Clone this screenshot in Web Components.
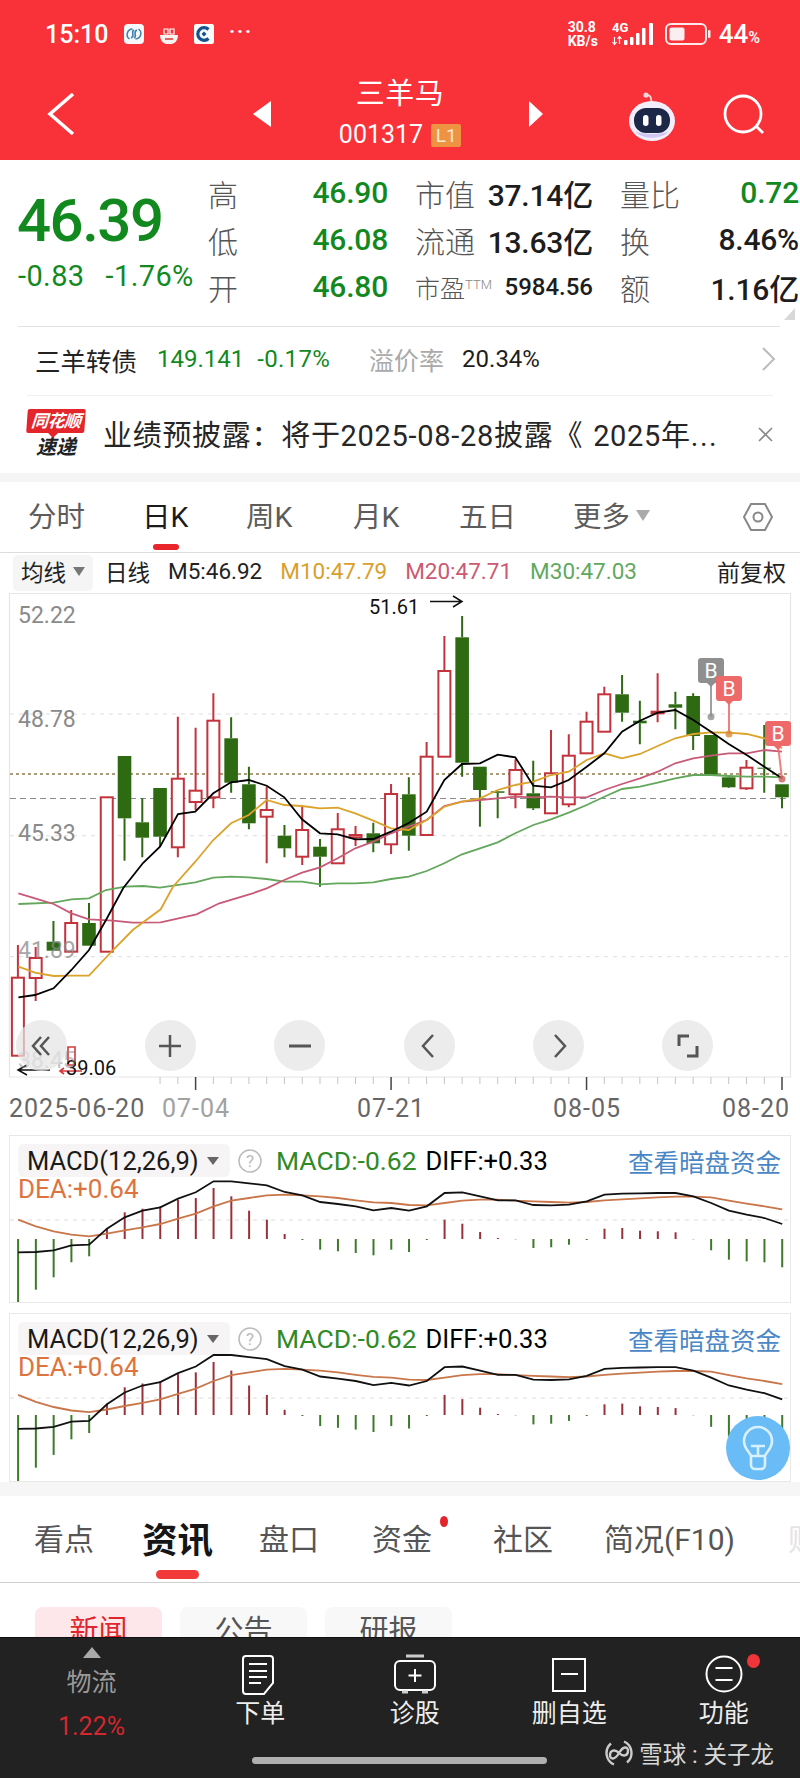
<!DOCTYPE html>
<html lang="zh">
<head>
<meta charset="utf-8">
<title>三羊马</title>
<style>
  html, body { margin: 0; padding: 0; background: #fff; }
  body {
    width: 800px; height: 1778px; overflow: hidden;
    font-family: Roboto, "Noto Sans CJK SC", sans-serif;
  }
</style>
</head>
<body>
<status-bar></status-bar>
<stock-nav name="三羊马" code="001317"></stock-nav>
<quote-panel></quote-panel>
<bond-row></bond-row>
<news-row></news-row>
<period-tabs></period-tabs>
<ma-legend></ma-legend>
<kline-chart></kline-chart>
<macd-panel style="height:168px;margin-top:10px" base="103" scale="1" dash="84"></macd-panel>
<macd-panel style="height:169px;margin-top:10px" base="101" scale="1.04" dash="84" bulb></macd-panel>
<info-tabs></info-tabs>
<bottom-bar>
  <tool-item text="下单">
    <svg slot="icon" width="40" height="42" viewBox="0 0 40 42" fill="none" stroke="#fff" stroke-width="2"><path d="M6 2h24a3 3 0 0 1 3 3v24l-9 11H6a3 3 0 0 1-3-3V5a3 3 0 0 1 3-3z"/><path d="M9 10h18M9 17h18M9 23h18M9 29h12"/></svg>
  </tool-item>
  <tool-item text="诊股">
    <svg slot="icon" width="44" height="42" viewBox="0 0 44 42" fill="none" stroke="#fff" stroke-width="2"><path d="M13 2h18" stroke-width="3" stroke="#ccc"/><rect x="2" y="7" width="40" height="29" rx="5"/><path d="M22 15v13M15.500 21.500h13"/><path d="M9 38h6M29 38h6" stroke-width="3" stroke="#ccc"/></svg>
  </tool-item>
  <tool-item text="删自选">
    <svg slot="icon" width="36" height="42" viewBox="0 0 36 42" fill="none" stroke="#fff" stroke-width="2"><rect x="2" y="5" width="32" height="32"/><path d="M10 20h17"/></svg>
  </tool-item>
  <tool-item text="功能" dot>
    <svg slot="icon" width="40" height="42" viewBox="0 0 40 42" fill="none" stroke="#fff" stroke-width="2"><circle cx="20" cy="20" r="17.500"/><path d="M11.500 14h17M11.500 26h17"/></svg>
  </tool-item>
</bottom-bar>

<script>
const FONT = 'Roboto, "Noto Sans CJK SC", sans-serif'

// base class, every element just sets its html once
class Base extends HTMLElement {
  constructor () {
    super()
    this.attachShadow({ mode: 'open' })
  }
  render (html) {
    this.shadowRoot.innerHTML = html
  }
}

class StatusBar extends Base {
  connectedCallback () {
    this.render(`
    <style>
      :host { display: flex; align-items: center; height: 68px; background: #f93239; color: #fff; font-family: ${FONT}; padding: 0 40px 0 45px; box-sizing: border-box; }
      .time { font-size: 25px; font-weight: 500; width: 79px; }
      .app { width: 20px; height: 20px; margin-right: 15px; display: block; }
      .more { font-size: 20px; letter-spacing: 2px; font-weight: 700; line-height: 20px; margin-top: -6px; }
      .right { margin-left: auto; display: flex; align-items: center; }
      .speed { font-size: 14px; font-weight: 700; line-height: 14px; width: 44px; }
      .pct { font-size: 26px; font-weight: 500; margin-left: 8px; }
      .pct small { font-size: 16px; }
      .net { display: block; margin-right: 9px; }
    </style>
    <span class="time">15:10</span>
    <svg class="app" viewBox="0 0 20 20"><rect width="20" height="20" rx="4" fill="#f4f8fb"/><path d="M8.500 5a5.500 5.500 0 0 0-3 10M11.500 15a5.500 5.500 0 0 0 3-10M7 14c5-2-1-6 3-8M13 6c-5 2 1 6-3 8" fill="none" stroke="#3d7fa8" stroke-width="1.500"/></svg>
    <svg class="app" viewBox="0 0 20 20"><path d="M5 5h4v5H5zM11 5h4v5h-4z" fill="none" stroke="#fff" stroke-width="1.200"/><path d="M1 11h18c0 5-3 9-7 9H8c-4 0-7-4-7-9z" fill="#f7f2f2"/><path d="M6 15h8" stroke="#d9333a" stroke-width="1.500"/></svg>
    <svg class="app" viewBox="0 0 20 20"><rect width="20" height="20" rx="2" fill="#f8fafc"/><path d="M14.500 5.500a6.300 6.300 0 1 0 0 9" fill="none" stroke="#14528f" stroke-width="3.200"/><path d="M10 7.500l2.500 2.500-2.500 2.500-2.500-2.500z" fill="#14528f"/></svg>
    <span class="more">···</span>
    <div class="right">
      <div class="speed">30.8<br>KB/s</div>
      <svg class="net" width="44" height="26" viewBox="0 0 44 26" fill="#fff">
        <text x="0" y="11" font-size="13" font-weight="700" font-family="Roboto">4G</text>
        <path d="M2.500 16v7M0.500 21l2 2.500 2-2.500M7.500 23v-7M5.500 18l2-2.500 2 2.500" stroke="#fff" stroke-width="1.200" fill="none"/>
        <rect x="12" y="19" width="3.500" height="5" rx="1"/><rect x="18" y="16" width="3.500" height="8" rx="1"/><rect x="24" y="12" width="3.500" height="12" rx="1"/><rect x="30" y="7" width="3.500" height="17" rx="1"/><rect x="37" y="2" width="4" height="22" rx="1"/>
      </svg>
      <svg width="46" height="22" viewBox="0 0 46 22"><rect x="1" y="1" width="40" height="20" rx="5" fill="none" stroke="#fde9ea" stroke-width="2"/><rect x="4.500" y="4.500" width="15" height="13" rx="2" fill="#fbeef0"/><rect x="43" y="7" width="2.500" height="8" rx="1" fill="#fde9ea"/></svg>
      <span class="pct">44<small>%</small></span>
    </div>`)
  }
}

class StockNav extends Base {
  connectedCallback () {
    this.render(`
    <style>
      :host { display: grid; grid-template-columns: 253px 18px 258px 14px 257px; align-items: center; height: 92px; background: #f93239; color: #fff; font-family: ${FONT}; }
      .back { padding-left: 46px; display: block; }
      .mid { text-align: center; }
      .name { font-size: 29px; line-height: 36px; letter-spacing: .5px; margin-top: -2px; }
      .code { font-size: 25px; line-height: 30px; margin-top: 8px; display: flex; justify-content: center; align-items: center; gap: 8px; }
      .lv { background: #ee9342; color: #fde8d0; font-size: 19px; line-height: 23px; width: 30px; border-radius: 2px; }
      .tools { display: flex; align-items: center; padding-left: 85px; gap: 46px; margin-top: 4px; }
    </style>
    <svg class="back" width="30" height="44" viewBox="0 0 30 44" fill="none" stroke="#fff" stroke-width="3.500"><path d="M27 2L4 22l23 20"/></svg>
    <svg width="18" height="26" viewBox="0 0 18 26" fill="#fff"><path d="M18 0v26L0 13z"/></svg>
    <div class="mid">
      <div class="name">${this.getAttribute('name')}</div>
      <div class="code"><span>${this.getAttribute('code')}</span><span class="lv">L1</span></div>
    </div>
    <svg width="14" height="26" viewBox="0 0 14 26" fill="#fff"><path d="M0 0v26l14-13z"/></svg>
    <div class="tools">
      <svg width="48" height="50" viewBox="0 0 48 50"><path d="M18 5c2-2 5 0 5 3l1 5" fill="none" stroke="#f8d7dc" stroke-width="1.800"/><circle cx="18" cy="4" r="2.600" fill="#f8d7dc"/><ellipse cx="24" cy="30" rx="23" ry="20" fill="#f3eefc"/><path d="M7 40c6 9 28 9 34 0-6 4-28 4-34 0z" fill="#cfc6f2"/><rect x="6" y="17" width="36" height="25" rx="12" fill="#1d2747"/><rect x="15" y="24" width="5.500" height="11" rx="2.700" fill="#fff"/><rect x="28" y="24" width="5.500" height="11" rx="2.700" fill="#fff"/></svg>
      <svg width="44" height="46" viewBox="0 0 44 46" fill="none" stroke="#fff" stroke-width="2.800"><circle cx="21" cy="21" r="18"/><path d="M34 33l7 7"/></svg>
    </div>`)
  }
}

class QuoteCell extends Base {
  connectedCallback () {
    const small = this.hasAttribute('small')
    this.render(`
    <style>
      :host { display: flex; justify-content: space-between; align-items: center; height: 47px; font-family: ${FONT}; }
      .l { font-size: ${small ? 25 : 30}px; color: #555; font-weight: 300; white-space: nowrap; }
      .l sup { font-size: 13px; color: #888; line-height: 0; vertical-align: 9px; }
      .v { font-size: ${small ? 24 : 30}px; font-weight: 500; letter-spacing: ${small ? 0 : -.2}px; color: ${this.getAttribute('color') || '#1d1d1d'}; white-space: nowrap; }
    </style>
    <span class="l">${this.getAttribute('label')}</span>
    <span class="v"><slot></slot></span>`)
  }
}

class QuotePanel extends Base {
  connectedCallback () {
    const g = '#12891f'
    this.render(`
    <style>
      :host { display: grid; grid-template-columns: 181px 180px 178px 179px; column-gap: 27px; height: 166px; box-sizing: border-box; padding-top: 9px; background: #fff; font-family: ${FONT}; position: relative; }
      .big { color: ${g}; }
      .price { font-size: 60px; font-weight: 500; line-height: 60px; margin: 22px 0 0 17px; letter-spacing: -1.500px; }
      .chg { font-size: 29px; line-height: 30px; margin: 10px 0 0 18px; display: flex; gap: 21px; white-space: nowrap; letter-spacing: .4px; }
      .col { display: block; }
      .corner { position: absolute; right: 5px; bottom: 6px; width: 0; height: 0; border-left: 11px solid transparent; border-bottom: 12px solid #d8d8d8; }
    </style>
    <div class="big">
      <div class="price">46.39</div>
      <div class="chg"><span>-0.83</span><span>-1.76%</span></div>
    </div>
    <div class="col">
      <quote-cell label="高" color="${g}">46.90</quote-cell>
      <quote-cell label="低" color="${g}">46.08</quote-cell>
      <quote-cell label="开" color="${g}">46.80</quote-cell>
    </div>
    <div class="col">
      <quote-cell label="市值">37.14亿</quote-cell>
      <quote-cell label="流通">13.63亿</quote-cell>
      <quote-cell label="市盈<sup>TTM</sup>" small>5984.56</quote-cell>
    </div>
    <div class="col">
      <quote-cell label="量比" color="${g}">0.72</quote-cell>
      <quote-cell label="换">8.46%</quote-cell>
      <quote-cell label="额">1.16亿</quote-cell>
    </div>
    <div class="corner"></div>`)
  }
}

class BondRow extends Base {
  connectedCallback () {
    this.render(`
    <style>
      :host { display: flex; align-items: center; height: 69px; margin: 0 20px 0 18px; padding: 0 0 4px 17px; border-top: 1px solid #e2e2e2; box-sizing: border-box; font-family: ${FONT}; font-size: 24px; white-space: nowrap; }
      .n { color: #222; width: 122px; font-size: 25.500px; }
      .g { color: #12891f; }
      .p { margin-left: 13px; letter-spacing: .3px; }
      .lbl { color: #aaa; margin-left: 39px; width: 93px; font-size: 25px; }
      .v { color: #1d1d1d; }
      svg { margin-left: auto; margin-right: 4px; }
    </style>
    <span class="n">三羊转债</span>
    <span class="g">149.141</span>
    <span class="g p">-0.17%</span>
    <span class="lbl">溢价率</span>
    <span class="v">20.34%</span>
    <svg width="15" height="24" viewBox="0 0 15 24" fill="none" stroke="#bbb" stroke-width="2"><path d="M2 1l11 11L2 23"/></svg>`)
  }
}

class NewsRow extends Base {
  connectedCallback () {
    this.render(`
    <style>
      :host { display: block; height: 87px; background: #f5f5f5; font-family: ${FONT}; }
      .panel { height: 78px; background: #fff; padding: 0 27px; box-sizing: border-box; }
      .wrap { display: flex; align-items: center; height: 78px; box-sizing: border-box; border-top: 1px solid #efefef; }
      .logo { width: 58px; flex: none; text-align: center; margin-top: -2px; }
      .top { position: relative; background: #e4252b; color: #fff; font: italic 700 17px/24px ${FONT}; border-radius: 2px; letter-spacing: -.5px; transform: skewX(-4deg); }
      .top::after { content: ""; position: absolute; left: 22px; bottom: -5px; border: 5px solid transparent; border-top-color: #e4252b; border-bottom: 0; }
      .bot { font: italic 700 20px/22px ${FONT}; color: #222; margin-top: 3px; }
      .txt { font-size: 29px; letter-spacing: .7px; color: #262626; margin: -4px 0 0 18px; width: 630px; white-space: nowrap; overflow: hidden; }
      .txt span { margin-left: 10px; }
      .txt b { font-weight: 400; letter-spacing: 1.500px; }
      svg { margin-left: auto; }
    </style>
    <div class="panel">
    <div class="wrap">
      <div class="logo"><div class="top">同花顺</div><div class="bot">速递</div></div>
      <div class="txt">业绩预披露：将于2025-08-28披露《<span>2025年<b>...</b></span></div>
      <svg width="15" height="15" viewBox="0 0 15 15" fill="none" stroke="#888" stroke-width="1.600"><path d="M1 1l13 13M14 1L1 14"/></svg>
    </div>
    </div>`)
  }
}

class PeriodTabs extends Base {
  connectedCallback () {
    this.render(`
    <style>
      :host { display: grid; grid-template-columns: 114px 104px 107px 106px 114px 1fr; align-items: center; height: 71px; box-sizing: border-box; padding: 0 0 5px 28px; border-bottom: 1px solid #ddd; font-family: ${FONT}; font-size: 28.500px; color: #5c5c5c; position: relative; white-space: nowrap; }
      .on { color: #1b1b1b; position: relative; }
      .on::after { content: ""; position: absolute; left: 11px; top: 50px; width: 26px; height: 6px; border-radius: 3px; background: #e8262c; }
      .more { display: flex; align-items: center; gap: 6px; }
      .more i { border: 7px solid transparent; border-top: 11px solid #aaa; border-bottom: 0; margin-top: 2px; }
      .hex { position: absolute; right: 27px; top: 20px; }
    </style>
    <span>分时</span>
    <span class="on">日K</span>
    <span>周K</span>
    <span>月K</span>
    <span>五日</span>
    <span class="more">更多<i></i></span>
    <svg class="hex" width="30" height="30" viewBox="0 0 30 30" fill="none" stroke="#888" stroke-width="2"><path d="M8 2h14l7 13-7 13H8L1 15z"/><circle cx="15" cy="15" r="4.500"/></svg>`)
  }
}

class MaLegend extends Base {
  connectedCallback () {
    this.render(`
    <style>
      :host { display: flex; align-items: center; height: 40px; padding-left: 13px; box-sizing: border-box; font-family: ${FONT}; font-size: 22.500px; white-space: nowrap; color: #222; }
      :host > span { padding-bottom: 4px; }
      .chip { display: flex; align-items: center; justify-content: space-between; width: 80px; height: 36px; box-sizing: border-box; padding: 0 8px 4px; background: #f5f5f5; border-radius: 5px; margin-right: 12px; }
      .chip i { border: 6px solid transparent; border-top: 9px solid #777; border-bottom: 0; }
      .m { margin-left: 18px; }
      .end { margin-left: auto; margin-right: 14px; font-size: 23px; }
      span.chip { padding-bottom: 4px; }
    </style>
    <span class="chip">均线<i></i></span>
    <span>日线</span>
    <span class="m">M5:46.92</span>
    <span class="m" style="color:#d9a02c">M10:47.79</span>
    <span class="m" style="color:#cb5a72">M20:47.71</span>
    <span class="m" style="color:#5fa95f">M30:47.03</span>
    <span class="end">前复权</span>`)
  }
}

// candles: [kind, wick top, body top, body bottom, wick bottom], y in page px
const CANDLES = [
  ['r',945,977.7,1055.7,1055.7],['r',947,958,978,1001],['g',921,941.7,950.7,950.7],['r',910,923,951.7,951.7],
  ['g',903,923,945.7,945.7],['r',797.3,797.3,951.7,951.7],['g',756,756,818.3,860.7],['g',798.3,822.3,837.7,857.3],
  ['g',788,788,836.7,846.7],['r',716.7,778.7,847.3,857.3],['r',727.7,790.7,802,810],['r',693.3,720.7,797.3,808.3],
  ['g',717.3,738.3,782.7,792.7],['g',766.7,784.3,823.3,829.3],['r',786.7,810,816.7,863.3],['g',825,835.7,848.3,857.3],
  ['r',805,830,856.7,865],['g',839,846.7,856.7,886.7],['r',813,829.3,863.3,863.3],['r',826,835,837.3,846],
  ['g',822.7,833.3,843.3,852.3],['r',784,794,844.3,854],['g',777.3,794.3,835.7,850.7],['r',742,756.7,835,835],
  ['r',636,671,756.7,756.7],['g',616,637.3,762.7,776.7],['g',766.7,766.7,790,826.7],['g',791,791.3,792.8,818.3],
  ['r',759.3,770,794.3,808.3],['g',760.7,793.3,808.3,810],['r',730,773.3,813.3,813.3],['r',734.3,755.7,804.3,807.3],
  ['r',711.7,721.7,753.3,753.3],['r',686.7,694.3,731.7,731.7],['g',675,694.3,712.7,721.7],['g',700.7,720.7,723.3,744.3],
  ['r',673.3,711.7,713.3,722.3],['g',691.7,704.3,707.7,729.3],['g',693.3,696,736,750],['g',735,735,775,775],
  ['g',775,777.3,787.3,788],['r',760,767.7,788.3,790],['g',725,767.7,768.7,792.7],['g',784.3,784.3,797.3,808.3]
]
const M5 = [[18.4,997.3],[35,995],[53.6,988.3],[71.4,970],[89,950],[106,920],[123.3,888],[143,863],[160,846.7],[178,814],[195.3,811.7],[213.3,793.3],[231,782.3],[248.7,780],[266.7,785.7],[284.3,797.3],[302,819.3],[320,833.3],[337.7,834.3],[355.3,839.3],[373.3,839],[391,831.7],[408.7,823],[426.7,811.7],[444.3,780],[462,764],[480,763.3],[497.7,754.7],[515.3,757.3],[533.3,785.7],[551,787.3],[568.7,780],[586.7,766.7],[604.3,753.3],[622,731.7],[640,720.7],[657.7,712.7],[675.3,710],[693.3,720],[711,731.7],[728.7,744],[746.7,755],[764.3,766.7],[782,778.3]]
const M10 = [[18.4,966.7],[35,972.7],[53.6,976],[71.4,975.7],[89,975.7],[113,950],[132.7,930],[160.7,909.3],[173,886.7],[195.3,861.7],[213.3,840],[231,823.3],[248.7,815],[266.7,800],[284.3,805],[302,806],[320,808.3],[337.7,807.7],[355.3,813.3],[373.3,820.7],[391,828.3],[408.7,830],[426.7,820],[444.3,806.7],[462,801.7],[480,798.3],[497.7,790],[515.3,785],[533.3,781.7],[551,775],[568.7,771.7],[586.7,760],[604.3,753.3],[622,758.3],[640,754],[657.7,746],[675.3,738.3],[693.3,734],[711,732.3],[728.7,732.7],[746.7,734],[764.3,738.3],[782,748.3]]
const M20 = [[18.4,893.3],[35,898.3],[53.6,904],[71.4,913.3],[89,919.3],[113,920.7],[132.7,922.7],[160.7,922.3],[196.4,914.3],[219.4,903.3],[252.6,893.3],[266.7,888.3],[284.3,880],[302,872.7],[320,867.3],[337.7,858.3],[355.3,848.3],[373.3,841.7],[391,833.3],[408.7,826.7],[426.7,820],[444.3,806],[462,801.7],[480,800],[497.7,798.3],[515.3,796.7],[533.3,797.3],[551,796.7],[568.7,797.3],[586.7,797.3],[604.3,790],[622,784],[640,778.3],[657.7,771.7],[675.3,763.3],[693.3,758.3],[711,755.7],[728.7,753.3],[746.7,753.3],[764.3,750],[782,751.7]]
const M30 = [[18.4,904],[53.6,902.7],[71.4,899.3],[89,898.3],[106,890],[125,886.7],[143,886],[160,887.7],[195.3,882.3],[213.3,877.7],[231,876.7],[248.7,877.3],[266.7,879],[284.3,881.7],[302,881.7],[320,884.3],[337.7,883.3],[355.3,883.3],[373.3,882.3],[391,879],[408.7,876.7],[426.7,871],[444.3,863.3],[462,854.3],[480,848.3],[497.7,842.3],[515.3,833.3],[533.3,825],[551,819.3],[568.7,812.7],[586.7,805],[604.3,796.7],[622,789],[640,786.7],[657.7,782.7],[675.3,778.3],[693.3,775],[711,775],[728.7,776],[746.7,776.7],[764.3,776.7],[782,777.3]]

const candleX = i => 17.9 + 17.77 * i
const pts = arr => arr.map(p => p.join(',')).join(' ')

function candleSvg (c, i) {
  const x = candleX(i)
  const [kind, top, bTop, bBot, bot] = c
  const color = kind === 'r' ? '#c4323c' : '#2d6a12'
  let s = `<path d="M${x} ${top}V${bTop}M${x} ${bBot}V${bot}" stroke="${color}" stroke-width="2"/>`
  if (kind === 'r') {
    s += `<rect x="${x - 6}" y="${bTop}" width="12" height="${bBot - bTop}" fill="#fff" stroke="${color}" stroke-width="2"/>`
  } else {
    s += `<rect x="${x - 6.8}" y="${bTop}" width="13.6" height="${bBot - bTop}" fill="${color}"/>`
  }
  return s
}

function pin (x, y, w, color, pinTo, tipX, dot) {
  return `<path d="M${x + w / 2} ${y + 24}L${tipX} ${pinTo}" stroke="${color}" stroke-width="2" opacity=".85"/>
    <circle cx="${tipX}" cy="${pinTo}" r="3.500" fill="${dot}" opacity=".8"/>
    <rect x="${x}" y="${y}" width="${w}" height="25" rx="3" fill="${color}"/>
    <path d="M${x + w / 2 - 4} ${y + 25}h8l-4 4z" fill="${color}"/>
    <text x="${x + w / 2}" y="${y + 20}" text-anchor="middle" font-size="21" fill="#fff">B</text>`
}

class KlineChart extends Base {
  connectedCallback () {
    const label = (t, x, y, op) => `<text x="${x}" y="${y}" font-size="23" fill="#8a8a8a" opacity="${op || 1}">${t}</text>`
    let ticks = ''
    for (let i = 8; i < 44; i++) {
      const major = (i - 10) % 11 === 0
      ticks += `<path d="M${candleX(i)} 1077v${major ? 13 : 7}" stroke="${major ? '#444' : '#c4c4c4'}" stroke-width="${major ? 1.5 : 1}"/>`
    }
    const date = (t, x, fill) => `<text x="${x}" y="1117" font-size="25" fill="${fill || '#666'}" letter-spacing="1">${t}</text>`
    const btn = inner => `<div class="btn"><svg width="30" height="30" viewBox="0 0 30 30" fill="none" stroke="#555" stroke-width="2.500">${inner}</svg></div>`
    this.render(`
    <style>
      :host { display: grid; height: 532px; font-family: ${FONT}; }
      svg.main { grid-area: 1 / 1; display: block; }
      .btns { grid-area: 1 / 1; align-self: start; margin-top: 427px; display: flex; padding-left: 15.500px; gap: 78.400px; }
      .btn { width: 51px; height: 51px; border-radius: 50%; background: rgba(228,228,228,.72); display: flex; align-items: center; justify-content: center; }
    </style>
    <svg class="main" width="800" height="532" viewBox="0 593 800 532" font-family="Roboto, sans-serif">
      <path d="M9.500 1077V593.500H790.500V1077H9.500" fill="none" stroke="#e6e6e6" stroke-width="1.200"/>
      <path d="M10 714H790M10 835.700H790M10 956.700H790" stroke="#dedede" stroke-dasharray="4 5"/>
      <path d="M10 774H790" stroke="#8d7d4c" stroke-width="1.300" stroke-dasharray="3 3"/>
      <path d="M10 798.500H790" stroke="#8b8b8b" stroke-width="1.200" stroke-dasharray="6 4"/>
      ${label('52.22', 18, 623)}
      ${label('48.78', 18, 727)}
      ${label('45.33', 18, 841)}
      ${CANDLES.map(candleSvg).join('')}
      <polyline points="${pts(M30)}" fill="none" stroke="#63a75c" stroke-width="1.800"/>
      <polyline points="${pts(M20)}" fill="none" stroke="#c85a78" stroke-width="1.800"/>
      <polyline points="${pts(M10)}" fill="none" stroke="#dca32a" stroke-width="1.800"/>
      <polyline points="${pts(M5)}" fill="none" stroke="#000" stroke-width="1.800"/>
      ${label('41.89', 18, 958, .75)}
      <path d="M68 1047h7v18h-7zM60 1071h22M64 1068l-4 3 4 3" fill="none" stroke="#d3383f" stroke-width="1.600"/>
      <text x="369" y="614" font-size="20" fill="#111">51.61</text>
      <path d="M430 601.500h31M453 596l9 5.500-9 5.500" fill="none" stroke="#111" stroke-width="1.500"/>
      <text x="66" y="1075" font-size="20" fill="#111">39.06</text>
      <path d="M50 1070H19M27 1065l-9 5 9 5" fill="none" stroke="#111" stroke-width="1.500"/>
      ${pin(698, 658, 26, '#8f8f8f', 716.7, 711, '#8f8f8f')}
      ${pin(716, 676, 26, '#ee6a6a', 734, 729, '#d98a3a')}
      ${pin(765, 721, 26, '#ee6a6a', 779, 782, '#c9605a')}
      ${ticks}
      ${date('2025-06-20', 9)}
      ${date('07-04', 162, '#a2a2a2')}
      ${date('07-21', 357)}
      ${date('08-05', 553)}
      ${date('08-20', 722)}
      ${label('38.45', 18, 1068, .5)}
    </svg>
    <div class="btns">
      ${btn('<path d="M15 6L7 15l8 9M23 6l-8 9 8 9"/>')}
      ${btn('<path d="M15 4v22M4 15h22"/>')}
      ${btn('<path d="M4 15h22" stroke-width="3"/>')}
      ${btn('<path d="M19 4L9 15l10 11"/>')}
      ${btn('<path d="M11 4l10 11-10 11"/>')}
      ${btn('<path d="M16 5H6v10M24 15v10H14" stroke-width="3"/>')}
    </div>`)
  }
}

// macd data, y is in the zoomed unit of the first panel, baseline 323
const HIST = [520,475,438,393,375,290,243,232,225,205,200,170,195,238,265,308,326,355,360,365,372,355,362,326,265,277,302,320,324,350,348,340,326,292,290,298,300,303,324,357,385,390,393,408]
const DIFF = [363,362,357,342,340,292,258,238,228,202,183,150,150,156,162,182,192,212,218,225,237,230,238,225,185,183,195,207,207,221,222,220,210,190,187,186,185,185,195,215,238,250,260,278]
const DEA = [265,285,300,310,315,307,297,288,278,262,247,225,208,200,192,190,192,195,200,207,213,215,221,222,215,208,205,205,208,210,212,214,212,207,204,201,198,196,196,198,208,217,225,234]

class MacdPanel extends Base {
  connectedCallback () {
    const base = +this.getAttribute('base')
    const k = +this.getAttribute('scale') / 3
    const h = parseInt(this.style.height)
    const y = v => base + (v - 323) * k
    const line = (arr, color) => `<polyline points="${arr.map((v, i) => (candleX(i) + 0.2) + ',' + y(v).toFixed(1)).join(' ')}" fill="none" stroke="${color}" stroke-width="1.800"/>`
    const bars = HIST.map((v, i) => {
      const up = v < 323
      return `<path d="M${candleX(i) + 0.2} ${base}V${y(v).toFixed(1)}" stroke="${up ? '#9a3038' : '#3c7a2c'}" stroke-width="2"/>`
    }).join('')
    const bulb = this.hasAttribute('bulb') ? `
      <div class="bulb"><svg width="40" height="46" viewBox="0 0 40 46" fill="none" stroke="#d9f0ff" stroke-width="2.600"><path d="M13 31c-1-4-7-7-7-15a14 14 0 0 1 28 0c0 8-6 11-7 15zM13 32v8a4 4 0 0 0 4 4h6a4 4 0 0 0 4-4v-8M13 21h14M20 21v10"/></svg></div>` : ''
    this.render(`
    <style>
      :host { display: grid; margin-left: 9px; width: 782px; box-sizing: border-box; border: 1px solid #e8e8e8; overflow: hidden; font-family: ${FONT}; }
      svg.plot { grid-area: 1 / 1; display: block; }
      .head { grid-area: 1 / 1; align-self: start; }
      .row { display: flex; align-items: center; height: 33px; margin-top: 8px; padding-left: 8px; font-size: 25px; white-space: nowrap; }
      .chip { display: flex; align-items: center; width: 212px; height: 33px; box-sizing: border-box; padding-left: 9px; background: #f6f4f4; border-radius: 6px; color: #1a1a1a; font-size: 25.500px; }
      .chip i { border: 6px solid transparent; border-top: 8px solid #666; border-bottom: 0; margin-left: 8px; }
      .q { width: 24px; height: 24px; margin: 0 14px 0 8px; display: block; }
      .g { color: #2f8a28; margin-right: 9px; font-size: 26.500px; }
      .diff { font-size: 25.500px; }
      .blue { margin-left: auto; margin-right: 9px; color: #4a87c6; font-size: 25.500px; }
      .dea { padding-left: 8px; font-size: 26px; line-height: 28px; color: #dd7440; margin-top: -2px; }
      .bulb { grid-area: 1 / 1; justify-self: end; align-self: end; width: 64px; height: 64px; border-radius: 50%; background: #69bcf6; display: flex; align-items: center; justify-content: center; margin-bottom: 1px; }
    </style>
    <div class="head">
      <div class="row">
        <span class="chip">MACD(12,26,9)<i></i></span>
        <svg class="q" viewBox="0 0 24 24"><circle cx="12" cy="12" r="11" fill="none" stroke="#bbb" stroke-width="1.500"/><text x="12" y="18" text-anchor="middle" font-size="17" fill="#bbb" font-family="Roboto">?</text></svg>
        <span class="g">MACD:-0.62</span>
        <span class="diff">DIFF:+0.33</span>
        <span class="blue">查看暗盘资金</span>
      </div>
      <div class="dea">DEA:+0.64</div>
    </div>
    <svg class="plot" width="780" height="${h - 2}" viewBox="10 0 780 ${h - 2}">
      <path d="M10 ${this.getAttribute('dash')}H790" stroke="#dedede" stroke-dasharray="4 5"/>
      ${bars}
      ${line(DEA, '#c9764a')}
      ${line(DIFF, '#111')}
    </svg>
    ${bulb}`)
  }
}

class InfoTabs extends Base {
  connectedCallback () {
    this.render(`
    <style>
      :host { display: block; font-family: ${FONT}; }
      .strip { height: 14px; background: #f6f6f6; }
      .tabs { display: grid; grid-template-columns: 108px 117px 113px 121px 111px 186px 1fr; align-items: center; height: 87px; box-sizing: border-box; padding: 0 0 4px 34px; border-bottom: 1px solid #cfcfcf; font-size: 30px; color: #555; white-space: nowrap; overflow: hidden; }
      .on { color: #161616; font-size: 35.500px; font-weight: 700; position: relative; }
      .on::after { content: ""; position: absolute; left: 14px; top: 58px; width: 43px; height: 9px; border-radius: 5px; background: #f23a3a; }
      .dot { position: relative; }
      .dot::after { content: ""; position: absolute; left: 68px; top: 1px; width: 8px; height: 11px; border-radius: 50%; background: #e2252c; }
      .fade { color: #e4e4e4; margin-left: -2px; }
      .subs { display: flex; gap: 18px; height: 54px; overflow: hidden; padding: 24px 0 0 35px; box-sizing: border-box; }
      .sub { width: 127px; height: 60px; border-radius: 8px; background: #f8f8f8; color: #555; font-size: 29px; line-height: 42px; padding-top: 3px; text-align: center; }
      .sub.act { background: #fde7ea; color: #e0262c; }
    </style>
    <div class="strip"></div>
    <div class="tabs">
      <span>看点</span><span class="on">资讯</span><span>盘口</span><span class="dot">资金</span><span>社区</span><span>简况(F10)</span><span class="fade">财</span>
    </div>
    <div class="subs">
      <div class="sub act">新闻</div><div class="sub">公告</div><div class="sub">研报</div>
    </div>`)
  }
}

class ToolItem extends Base {
  connectedCallback () {
    const dot = this.hasAttribute('dot') ? '<i></i>' : ''
    this.render(`
    <style>
      :host { display: flex; flex-direction: column; align-items: center; font-family: ${FONT}; color: #eee; font-size: 25px; position: relative; }
      .ic { height: 42px; margin-top: 16px; }
      .t { line-height: 30px; margin-top: 3px; }
      i { position: absolute; left: 100px; top: 16px; width: 13px; height: 14px; border-radius: 50%; background: #f0353a; }
    </style>
    <div class="ic"><slot name="icon"></slot></div>
    <div class="t">${this.getAttribute('text')}</div>
    ${dot}`)
  }
}

class BottomBar extends Base {
  connectedCallback () {
    this.render(`
    <style>
      :host { display: block; height: 141px; background: #222; font-family: ${FONT}; border-top: 1px solid #111; box-sizing: border-box; }
      .tools { display: grid; grid-template-columns: 183px repeat(4, 154.500px); height: 104px; }
      .first { text-align: center; color: #999; font-size: 25px; }
      .tri { display: block; width: 0; height: 0; margin: 9px auto 0; border: 9px solid transparent; border-bottom: 11px solid #aaa; border-top: 0; }
      .first div { line-height: 30px; margin-top: 10px; }
      .first b { display: block; font-weight: 400; color: #d2282e; line-height: 30px; margin-top: 14px; }
      .foot { display: flex; align-items: center; height: 36px; padding-left: 252px; }
      .home { width: 295px; height: 7px; border-radius: 4px; background: #b0b0b0; }
      .mark { display: flex; align-items: center; margin-left: auto; margin-right: 26px; color: #d8d8d8; font-size: 23.500px; gap: 6px; margin-top: -15px; white-space: nowrap; }
    </style>
    <div class="tools">
      <div class="first"><span class="tri"></span><div>物流</div><b>1.22%</b></div>
      <slot></slot>
    </div>
    <div class="foot">
      <div class="home"></div>
      <div class="mark">
        <svg width="28" height="28" viewBox="0 0 28 28" fill="none" stroke="#ccc" stroke-width="2.400"><path d="M6 4.500A12.500 12.500 0 0 0 9 25.500M22 23.500A12.500 12.500 0 0 0 19 2.500"/><path d="M14 14c4-7 9-7 9-2s-5 6-9 2c-4-4-9-3-9 2s5 5 9-2z"/></svg>
        <span>雪球 : 关子龙</span>
      </div>
    </div>`)
  }
}

customElements.define('status-bar', StatusBar)
customElements.define('stock-nav', StockNav)
customElements.define('quote-cell', QuoteCell)
customElements.define('quote-panel', QuotePanel)
customElements.define('bond-row', BondRow)
customElements.define('news-row', NewsRow)
customElements.define('period-tabs', PeriodTabs)
customElements.define('ma-legend', MaLegend)
customElements.define('kline-chart', KlineChart)
customElements.define('macd-panel', MacdPanel)
customElements.define('info-tabs', InfoTabs)
customElements.define('tool-item', ToolItem)
customElements.define('bottom-bar', BottomBar)
</script>
</body>
</html>
